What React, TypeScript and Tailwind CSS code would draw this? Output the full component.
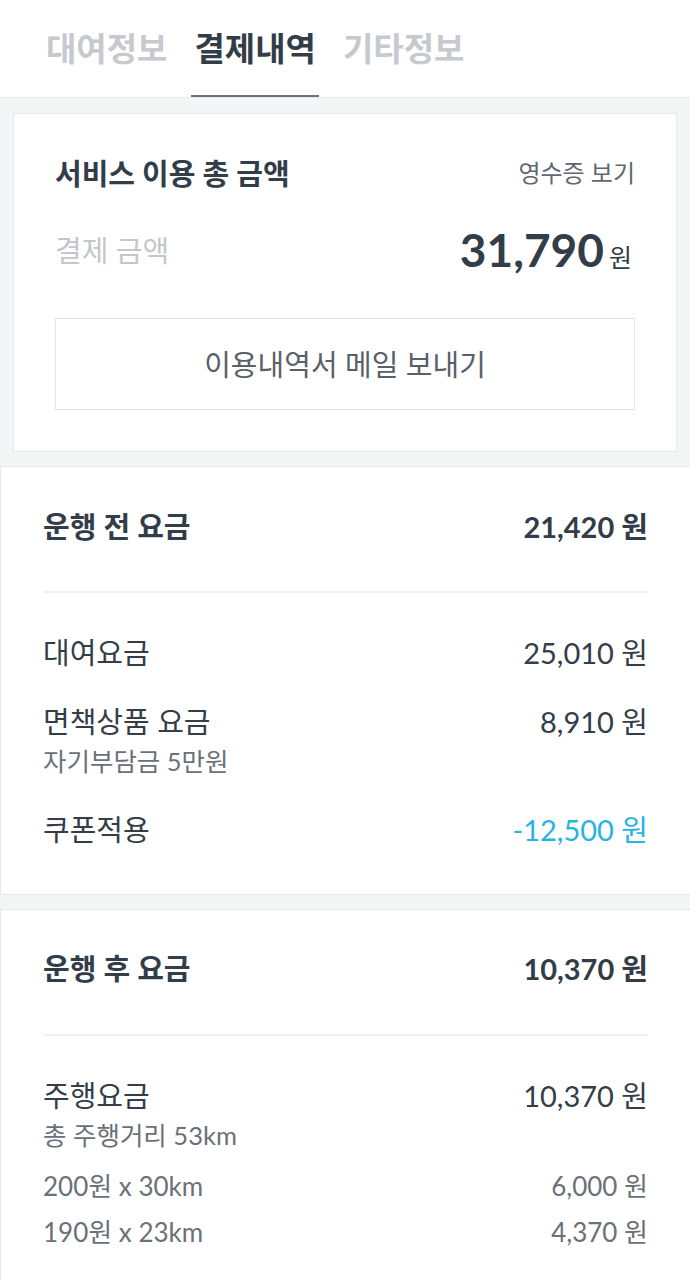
import React from 'react';

const FONT = "font-['Lato','Noto_Sans_CJK_KR',sans-serif]";

const tabs = [
  { key: 'rent', label: '대여정보' },
  { key: 'pay', label: '결제내역' },
  { key: 'etc', label: '기타정보' },
];

interface RowProps {
  label: string;
  amount: string;
  sub?: string;
  blue?: boolean;
}

const FeeRow: React.FC<RowProps & { className?: string }> = ({ label, amount, sub, blue, className }) => (
  <div className={className}>
    <div className="flex h-[40px] items-center justify-between text-[29px] leading-none text-[#343d48]">
      <span>{label}</span>
      <span className={blue ? 'text-[#27b3e4]' : ''}>{amount} 원</span>
    </div>
    {sub && <div className="mt-[5px] flex h-[32px] items-center text-[25.5px] leading-none text-[#6a7179]">{sub}</div>}
  </div>
);

const SubRow: React.FC<{ label: string; amount: string; className?: string }> = ({ label, amount, className }) => (
  <div className={`flex h-[34px] items-center justify-between text-[26px] leading-none text-[#6a7179] ${className ?? ''}`}>
    <span>{label}</span>
    <span>{amount} 원</span>
  </div>
);

const SectionHead: React.FC<{ label: string; amount: string }> = ({ label, amount }) => (
  <div className="flex h-[40px] items-center justify-between text-[29px] font-bold leading-none text-[#333d48]">
    <span>{label}</span>
    <span>{amount} 원</span>
  </div>
);

export default function App() {
  return (
    <div className={`${FONT} min-h-[1280px] w-[690px] overflow-hidden bg-[#f4f5f7]`}>
      {/* tabs */}
      <div className="flex h-[98px] gap-[21px] border-b border-[#e6e8ea] bg-white pl-[43px]">
        {tabs.map((t) => {
          const active = t.key === 'pay';
          return (
            <div
              key={t.key}
              className={`flex items-center px-[3px] pt-[2px] text-[33px] font-bold leading-none ${
                active ? 'border-b-[2px] border-[#6d7174] text-[#333d48]' : 'border-b-[2px] border-transparent text-[#c6c9cd]'
              }`}
            >
              {t.label}
            </div>
          );
        })}
      </div>

      {/* total card */}
      <div className="mx-[13px] mt-[15px] border border-[#e6e8ea] bg-white px-[41px] pb-[41px] pt-[38px]">
        <div className="flex h-[42px] items-center justify-between leading-none">
          <span className="text-[29px] font-bold text-[#333d48]">서비스 이용 총 금액</span>
          <span className="text-[24px] text-[#5f6770]">영수증 보기</span>
        </div>
        <div className="mt-[30px] flex h-[52px] items-center justify-between leading-none">
          <span className="text-[29px] text-[#c3c6ca]">결제 금액</span>
          <span className="mr-[3px] flex items-baseline text-[#333d48]">
            <span className="text-[46px] font-bold">31,790</span>
            <span className="ml-[5px] text-[25px]">원</span>
          </span>
        </div>
        <button className="mt-[42px] flex h-[92px] w-full items-center justify-center border border-[#e3e4e6] bg-white text-[29px] leading-none text-[#5a6068]">
          이용내역서 메일 보내기
        </button>
      </div>

      {/* before driving */}
      <div className="mt-[14px] border-y border-l border-[#e6e8ea] bg-white pb-[45px] pl-[42px] pr-[42px] pt-[39px]">
        <SectionHead label="운행 전 요금" amount="21,420" />
        <div className="mt-[45px] h-[2px] bg-[#eef0f2]" />
        <FeeRow className="mt-[39px]" label="대여요금" amount="25,010" />
        <FeeRow className="mt-[29px]" label="면책상품 요금" amount="8,910" sub="자기부담금 5만원" />
        <FeeRow className="mt-[31px]" label="쿠폰적용" amount="-12,500" blue />
      </div>

      {/* after driving */}
      <div className="mt-[14px] border-y border-l border-[#e6e8ea] bg-white pb-[45px] pl-[42px] pr-[42px] pt-[38px]">
        <SectionHead label="운행 후 요금" amount="10,370" />
        <div className="mt-[46px] h-[2px] bg-[#eef0f2]" />
        <FeeRow className="mt-[39px]" label="주행요금" amount="10,370" sub="총 주행거리 53km" />
        <SubRow className="mt-[17px]" label="200원 x 30km" amount="6,000" />
        <SubRow className="mt-[12px]" label="190원 x 23km" amount="4,370" />
      </div>
    </div>
  );
}
